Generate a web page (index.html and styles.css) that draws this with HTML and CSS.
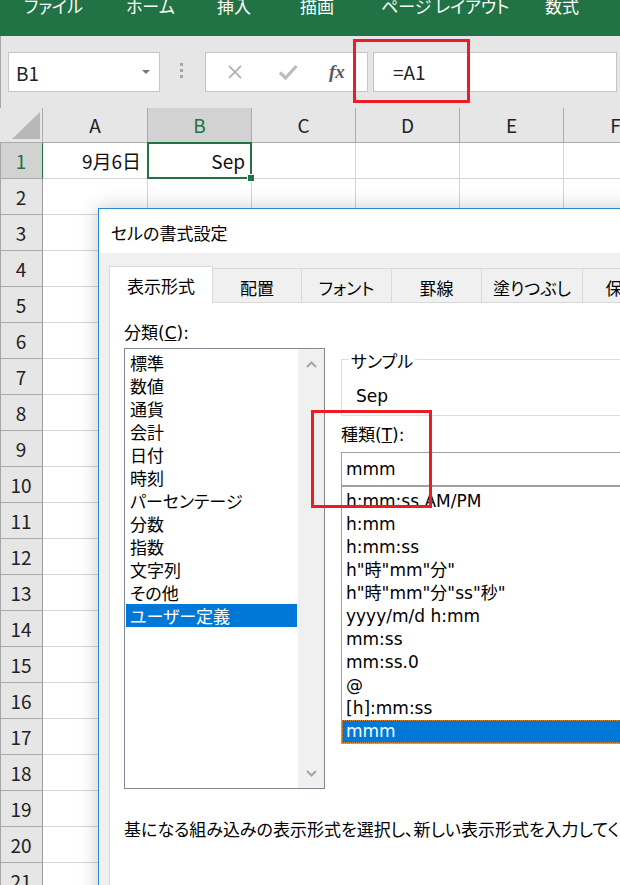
FILE: index.html
```html
<!DOCTYPE html>
<html lang="ja">
<head>
<meta charset="utf-8">
<title>セルの書式設定</title>
<link rel="stylesheet" href="styles.css">
</head>
<body>
<div class="app">
  <nav class="ribbon">
    <span class="rtab">ファイル</span>
    <span class="rtab">ホーム</span>
    <span class="rtab">挿入</span>
    <span class="rtab">描画</span>
    <span class="rtab">ページ レイアウト</span>
    <span class="rtab">数式</span>
  </nav>

  <div class="fbar">
    <div class="namebox"><span>B1</span><i class="caret"></i></div>
    <div class="grip"><i></i><i></i><i></i></div>
    <div class="fbtns">
      <svg class="cancel" width="14" height="14" viewBox="0 0 14 14"><path d="M1 1L13 13M13 1L1 13" stroke="#a9a9a9" stroke-width="1.7" fill="none"/></svg>
      <svg class="enter" width="20" height="16" viewBox="0 0 20 16"><path d="M2 8.5L7.5 14L18.5 2" stroke="#bcbcbc" stroke-width="3.2" fill="none"/></svg>
      <span class="fx">fx</span>
    </div>
    <div class="finput">=A1</div>
  </div>

  <div class="sheet">
    <div class="corner"><i></i></div>
    <div class="ch">A</div><div class="ch sel">B</div><div class="ch">C</div><div class="ch">D</div><div class="ch">E</div><div class="ch">F</div>

    <div class="rh sel">1</div><div class="c">9月6日</div><div class="c active">Sep<span class="selbox"><span class="handle"></span></span></div><div class="c"></div><div class="c"></div><div class="c"></div><div class="c"></div>
    <div class="rh">2</div><div class="c"></div><div class="c"></div><div class="c"></div><div class="c"></div><div class="c"></div><div class="c"></div>
    <div class="rh">3</div><div class="c"></div><div class="c"></div><div class="c"></div><div class="c"></div><div class="c"></div><div class="c"></div>
    <div class="rh">4</div><div class="c"></div><div class="c"></div><div class="c"></div><div class="c"></div><div class="c"></div><div class="c"></div>
    <div class="rh">5</div><div class="c"></div><div class="c"></div><div class="c"></div><div class="c"></div><div class="c"></div><div class="c"></div>
    <div class="rh">6</div><div class="c"></div><div class="c"></div><div class="c"></div><div class="c"></div><div class="c"></div><div class="c"></div>
    <div class="rh">7</div><div class="c"></div><div class="c"></div><div class="c"></div><div class="c"></div><div class="c"></div><div class="c"></div>
    <div class="rh">8</div><div class="c"></div><div class="c"></div><div class="c"></div><div class="c"></div><div class="c"></div><div class="c"></div>
    <div class="rh">9</div><div class="c"></div><div class="c"></div><div class="c"></div><div class="c"></div><div class="c"></div><div class="c"></div>
    <div class="rh">10</div><div class="c"></div><div class="c"></div><div class="c"></div><div class="c"></div><div class="c"></div><div class="c"></div>
    <div class="rh">11</div><div class="c"></div><div class="c"></div><div class="c"></div><div class="c"></div><div class="c"></div><div class="c"></div>
    <div class="rh">12</div><div class="c"></div><div class="c"></div><div class="c"></div><div class="c"></div><div class="c"></div><div class="c"></div>
    <div class="rh">13</div><div class="c"></div><div class="c"></div><div class="c"></div><div class="c"></div><div class="c"></div><div class="c"></div>
    <div class="rh">14</div><div class="c"></div><div class="c"></div><div class="c"></div><div class="c"></div><div class="c"></div><div class="c"></div>
    <div class="rh">15</div><div class="c"></div><div class="c"></div><div class="c"></div><div class="c"></div><div class="c"></div><div class="c"></div>
    <div class="rh">16</div><div class="c"></div><div class="c"></div><div class="c"></div><div class="c"></div><div class="c"></div><div class="c"></div>
    <div class="rh">17</div><div class="c"></div><div class="c"></div><div class="c"></div><div class="c"></div><div class="c"></div><div class="c"></div>
    <div class="rh">18</div><div class="c"></div><div class="c"></div><div class="c"></div><div class="c"></div><div class="c"></div><div class="c"></div>
    <div class="rh">19</div><div class="c"></div><div class="c"></div><div class="c"></div><div class="c"></div><div class="c"></div><div class="c"></div>
    <div class="rh">20</div><div class="c"></div><div class="c"></div><div class="c"></div><div class="c"></div><div class="c"></div><div class="c"></div>
    <div class="rh">21</div><div class="c"></div><div class="c"></div><div class="c"></div><div class="c"></div><div class="c"></div><div class="c"></div>
  </div>

  <section class="dialog">
    <header class="dtitle">セルの書式設定</header>
    <div class="dbody">
      <div class="tabs">
        <div class="tab active t1">表示形式</div>
        <div class="tab t2">配置</div>
        <div class="tab t3">フォント</div>
        <div class="tab t4">罫線</div>
        <div class="tab t5">塗りつぶし</div>
        <div class="tab t6">保護</div>
      </div>
      <div class="panel">
        <div class="prow">
          <div class="lcol">
            <div class="lbl">分類(<u>C</u>):</div>
            <div class="lbox">
              <ul class="items">
                <li>標準</li>
                <li>数値</li>
                <li>通貨</li>
                <li>会計</li>
                <li>日付</li>
                <li>時刻</li>
                <li>パーセンテージ</li>
                <li>分数</li>
                <li>指数</li>
                <li>文字列</li>
                <li>その他</li>
                <li class="sel">ユーザー定義</li>
              </ul>
              <div class="scroll">
                <svg width="11" height="7" viewBox="0 0 11 7"><path d="M1 6L5.5 1.5L10 6" stroke="#a6a6a6" stroke-width="2" fill="none"/></svg>
                <svg width="11" height="7" viewBox="0 0 11 7"><path d="M1 1L5.5 5.5L10 1" stroke="#a6a6a6" stroke-width="2" fill="none"/></svg>
              </div>
            </div>
          </div>
          <div class="rcol">
            <fieldset class="sample">
              <legend>サンプル</legend>
              <div class="sval">Sep</div>
            </fieldset>
            <div class="lbl2">種類(<u>T</u>):</div>
            <div class="tinput">mmm</div>
            <ul class="rlist">
              <li>h:mm:ss AM/PM</li>
              <li>h:mm</li>
              <li>h:mm:ss</li>
              <li>h"時"mm"分"</li>
              <li>h"時"mm"分"ss"秒"</li>
              <li>yyyy/m/d h:mm</li>
              <li>mm:ss</li>
              <li>mm:ss.0</li>
              <li>@</li>
              <li>[h]:mm:ss</li>
              <li class="sel">mmm</li>
            </ul>
          </div>
        </div>
        <p class="desc">基になる組み込みの表示形式を選択し、新しい表示形式を入力してください。</p>
      </div>
    </div>
  </section>

  <div class="mark m1"></div>
  <div class="mark m2"></div>
</div>
</body>
</html>
```

FILE: styles.css
```css
* { box-sizing: border-box; }
html, body { margin: 0; padding: 0; }
body {
  width: 620px;
  height: 885px;
  overflow: hidden;
  background: #fff;
  font-family: "Noto Sans CJK JP", sans-serif;
  color: #000;
}
.app {
  position: relative;
  width: 620px;
  height: 885px;
  overflow: hidden;
}

/* ribbon */
.ribbon {
  height: 36px;
  background: #217346;
  display: grid;
  grid-template-columns: 102px 91px 83px 81px 164px auto;
  padding-left: 24px;
  overflow: hidden;
  color: #fff;
  font-size: 17px;
  line-height: 17px;
  font-feature-settings: "palt";
}
.rtab { margin-top: -3px; white-space: nowrap; }

/* formula bar */
.fbar {
  height: 72px;
  background: #e6e6e6;
  display: flex;
  align-items: flex-start;
  padding-top: 16px;
  box-shadow: inset 1px 0 #a6a6a6;
}
.namebox {
  margin-left: 8px;
  width: 152px;
  height: 40px;
  background: #fff;
  border: 1px solid #c6c6c6;
  display: flex;
  align-items: center;
  justify-content: space-between;
  padding: 0 9px 0 7px;
  font-size: 19px;
  color: #222;
}
.caret {
  width: 0;
  height: 0;
  border-left: 4px solid transparent;
  border-right: 4px solid transparent;
  border-top: 4px solid #777;
}
.grip {
  margin: 11px 0 0 20px;
  display: flex;
  flex-direction: column;
  gap: 3px;
}
.grip i { width: 3px; height: 3px; background: #a6a6a6; }
.fbtns {
  margin-left: 22px;
  width: 163px;
  height: 40px;
  background: #fff;
  border: 1px solid #c6c6c6;
  display: flex;
  align-items: center;
  flex: none;
}
.cancel { margin-left: 22px; }
.enter { margin-left: 36px; }
.fx {
  margin-left: 31px;
  font-family: "Liberation Serif", serif;
  font-style: italic;
  font-weight: bold;
  font-size: 19px;
  color: #5a5a5a;
}
.finput {
  margin-left: 5px;
  width: 244px;
  flex: none;
  height: 40px;
  background: #fff;
  border: 1px solid #c6c6c6;
  padding-left: 19px;
  font-size: 19px;
  line-height: 38px;
  color: #222;
}

/* sheet */
.sheet {
  display: grid;
  grid-template-columns: 43px 105px 104px 104px 104px 104px 104px;
  grid-template-rows: 35px repeat(21, 36px);
  font-size: 19px;
}
.corner {
  background: #e6e6e6;
  border-right: 1px solid #ababab;
  border-bottom: 1px solid #ababab;
  display: flex;
  justify-content: flex-end;
  align-items: flex-end;
  padding: 0 2px 3px 0;
}
.corner i {
  width: 28px;
  height: 27px;
  background: #b7b7b7;
  clip-path: polygon(100% 0, 100% 100%, 0 100%);
}
.ch {
  background: #e6e6e6;
  border-right: 1px solid #ababab;
  border-bottom: 1px solid #ababab;
  text-align: center;
  line-height: 34px;
  color: #222;
}
.ch.sel { background: #d2d2d2; color: #217346; border-bottom-color: #217346; }
.rh {
  background: #e6e6e6;
  border-right: 1px solid #9b9b9b;
  border-bottom: 1px solid #ababab;
  text-align: center;
  line-height: 35px;
  color: #222;
  box-shadow: inset 1px 0 #a6a6a6;
}
.rh.sel { background: #d2d2d2; color: #217346; border-right-color: #217346; }
.c {
  border-right: 1px solid #d4d4d4;
  border-bottom: 1px solid #d4d4d4;
  text-align: right;
  padding-right: 6px;
  line-height: 35px;
  color: #111;
}
.c.active { position: relative; }
.selbox {
  position: absolute;
  inset: -1px;
  border: 2px solid #217346;
}
.handle {
  position: absolute;
  right: -5px;
  bottom: -5px;
  width: 8px;
  height: 8px;
  background: #217346;
  border: 1px solid #fff;
}

/* dialog */
.dialog {
  position: absolute;
  left: 98px;
  top: 208px;
  width: 560px;
  height: 700px;
  border: 1px solid #2b87d3;
  background: #f0f0f0;
  box-shadow: 0 0 18px rgba(0, 0, 0, 0.22);
  font-family: "DejaVu Sans", "Noto Sans CJK JP", sans-serif;
  font-size: 17px;
  font-feature-settings: "palt";
}
.dtitle {
  height: 44px;
  background: #fff;
  padding: 4px 0 0 12px;
  line-height: 40px;
  font-family: "Noto Sans CJK JP", sans-serif;
}
.dbody { padding: 13px 0 0 10px; }
.tabs {
  display: flex;
  align-items: flex-end;
  height: 36px;
  font-family: "Noto Sans CJK JP", sans-serif;
}
.tab {
  flex: none;
  height: 34px;
  border: 1px solid #d9d9d9;
  border-bottom: 0;
  margin-left: -1px;
  text-align: center;
  padding-top: 3px;
  line-height: 31px;
  white-space: nowrap;
}
.tab.active {
  height: 37px;
  margin-bottom: -1px;
  margin-left: 0;
  background: #fff;
  position: relative;
  z-index: 1;
}
.t1 { width: 104px; }
.t2 { width: 90px; }
.t3 { width: 91px; }
.t4 { width: 91px; }
.t5 { width: 102px; }
.t6 { width: 81px; }
.panel {
  background: #fff;
  border: 1px solid #d9d9d9;
  height: 700px;
}
.prow { display: flex; padding-left: 14px; }
.lcol { width: 201px; flex: none; }
.lbl { margin-top: 18px; line-height: 24px; }
.lbox {
  margin-top: 3px;
  height: 441px;
  border: 1px solid #828790;
  display: flex;
  background: #fff;
}
.items {
  flex: 1;
  margin: 0;
  padding: 2px 1px;
  list-style: none;
  font-family: "Noto Sans CJK JP", sans-serif;
}
.items li, .rlist li {
  line-height: 23px;
  padding-left: 4px;
  white-space: nowrap;
}
.items li.sel, .rlist li.sel { background: #0078d7; color: #fff; }
.scroll {
  width: 26px;
  background: #f0f0f0;
  display: flex;
  flex-direction: column;
  justify-content: space-between;
  align-items: center;
  padding: 12px 0 11px;
}
.rcol { margin-left: 16px; flex: 1; min-width: 0; }
.sample {
  margin: 43px 0 0;
  padding: 12px 0 7px 14px;
  border: 1px solid #dcdcdc;
  min-inline-size: 0;
}
.sample legend {
  margin-left: -7px;
  padding: 6px 2px 0;
  line-height: 20px;
}
.sval { line-height: 24px; }
.lbl2 { margin-top: 7px; line-height: 24px; }
.tinput {
  margin-top: 5px;
  height: 34px;
  border: 1px solid #a0a0a0;
  padding-left: 4px;
  line-height: 32px;
}
.rlist {
  margin: 0;
  height: 258px;
  border: 1px solid #a0a0a0;
  padding: 3px 0 0;
  list-style: none;
}
.rlist li.sel { outline: 1px dotted #d08a3a; outline-offset: -1px; }
.desc {
  margin: 28px 0 0 14px;
  line-height: 24px;
  white-space: nowrap;
  font-family: "Noto Sans CJK JP", sans-serif;
}

/* annotation boxes */
.mark {
  position: absolute;
  border: 3px solid #ec1c24;
}
.m1 { left: 353px; top: 39px; width: 117px; height: 64px; }
.m2 { left: 311px; top: 410px; width: 121px; height: 98px; }
```
